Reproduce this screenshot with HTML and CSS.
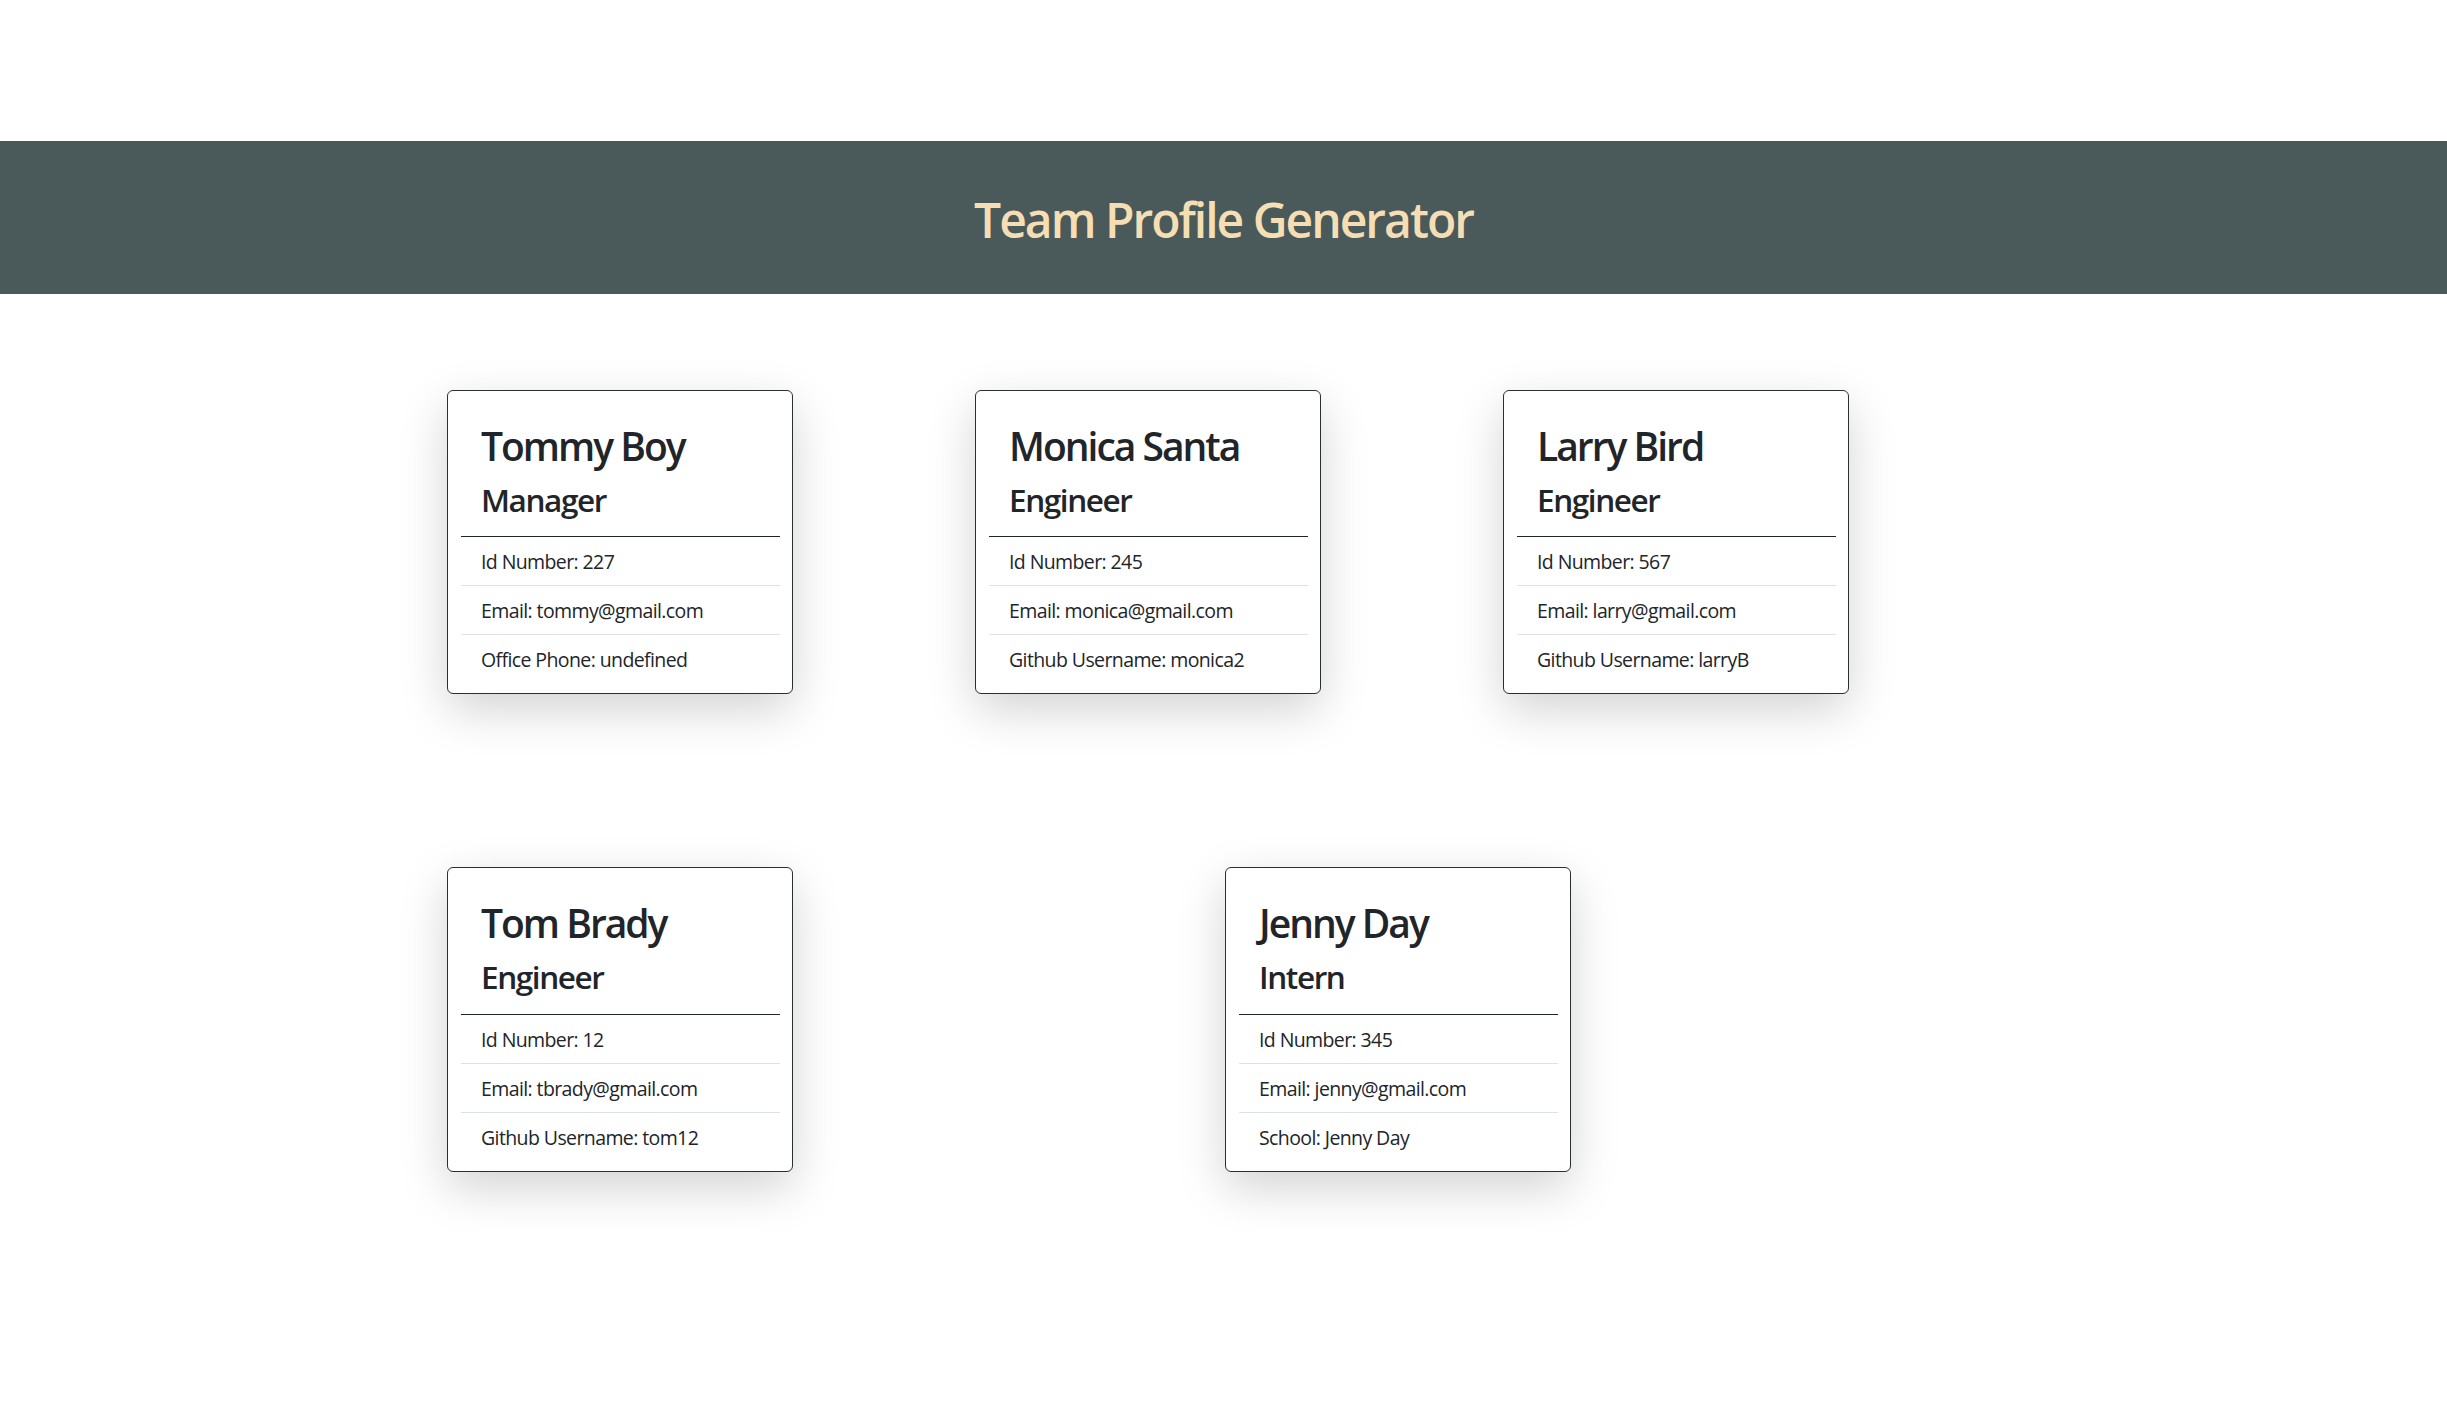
FILE: index.html
```html
<!DOCTYPE html>
<html lang="en">
<head>
<meta charset="utf-8">
<title>Team Profile Generator</title>
<link rel="stylesheet" href="styles.css">
</head>
<body>
<div class="page">
  <header class="banner">
    <h1 class="banner-title">Team Profile Generator</h1>
  </header>
  <main class="team">
    <div class="team-row row-three">
      <div class="card">
        <div class="card-head">
          <h2 class="card-name">Tommy Boy</h2>
          <h3 class="card-role">Manager</h3>
        </div>
        <ul class="card-list">
          <li class="card-item">Id Number: 227</li>
          <li class="card-item">Email: tommy@gmail.com</li>
          <li class="card-item">Office Phone: undefined</li>
        </ul>
      </div>
      <div class="card">
        <div class="card-head">
          <h2 class="card-name">Monica Santa</h2>
          <h3 class="card-role">Engineer</h3>
        </div>
        <ul class="card-list">
          <li class="card-item">Id Number: 245</li>
          <li class="card-item">Email: monica@gmail.com</li>
          <li class="card-item">Github Username: monica2</li>
        </ul>
      </div>
      <div class="card">
        <div class="card-head">
          <h2 class="card-name">Larry Bird</h2>
          <h3 class="card-role">Engineer</h3>
        </div>
        <ul class="card-list">
          <li class="card-item">Id Number: 567</li>
          <li class="card-item">Email: larry@gmail.com</li>
          <li class="card-item">Github Username: larryB</li>
        </ul>
      </div>
    </div>
    <div class="team-row row-two">
      <div class="card">
        <div class="card-head">
          <h2 class="card-name">Tom Brady</h2>
          <h3 class="card-role">Engineer</h3>
        </div>
        <ul class="card-list">
          <li class="card-item">Id Number: 12</li>
          <li class="card-item">Email: tbrady@gmail.com</li>
          <li class="card-item">Github Username: tom12</li>
        </ul>
      </div>
      <div class="card">
        <div class="card-head">
          <h2 class="card-name">Jenny Day</h2>
          <h3 class="card-role">Intern</h3>
        </div>
        <ul class="card-list">
          <li class="card-item">Id Number: 345</li>
          <li class="card-item">Email: jenny@gmail.com</li>
          <li class="card-item">School: Jenny Day</li>
        </ul>
      </div>
    </div>
  </main>
</div>
</body>
</html>
```
FILE: styles.css
```css
* { box-sizing: border-box; }

html, body {
  margin: 0;
  padding: 0;
  background: #ffffff;
}

body {
  font-family: "Open Sans", "Noto Sans", "Liberation Sans", sans-serif;
  color: #212529;
}

.page {
  padding-top: 141px;
  padding-bottom: 120px;
}

.banner {
  height: 153px;
  padding-top: 5px;
  background: #4a5959;
  display: flex;
  align-items: center;
  justify-content: center;
}

.banner-title {
  margin: 0;
  font-size: 48px;
  line-height: 1.2;
  font-weight: 600;
  color: #f5deb3;
  letter-spacing: -2px;
}

.team {
  padding-top: 96px;
  display: flex;
  flex-direction: column;
  gap: 173px;
}

.team-row {
  display: flex;
  padding-left: 447px;
}

.row-three { gap: 182px; }
.row-two { gap: 432px; }

.card {
  width: 346px;
  border: 1px solid #2b2e33;
  border-radius: 6px;
  padding: 13px 12px 10px 13px;
  background: #fff;
  box-shadow: 0 16px 48px rgba(0, 0, 0, 0.175);
}

.card-head {
  padding: 18px 20px 17px 20px;
  border-bottom: 1px solid #212529;
}

.card-name {
  margin: 0 0 11px 0;
  font-size: 39px;
  line-height: 48px;
  font-weight: 600;
  letter-spacing: -2px;
  white-space: nowrap;
}

.card-role {
  margin: 0;
  font-size: 31.5px;
  line-height: 38.4px;
  font-weight: 600;
  letter-spacing: -1.4px;
}

.card-list {
  list-style: none;
  margin: 0;
  padding: 0;
}

.card-item {
  padding: 10px 20px 8px 20px;
  font-size: 19.5px;
  line-height: 30px;
  letter-spacing: -0.6px;
  border-bottom: 1px solid #dee2e6;
  white-space: nowrap;
}

.card-item:last-child {
  border-bottom: none;
}
```
